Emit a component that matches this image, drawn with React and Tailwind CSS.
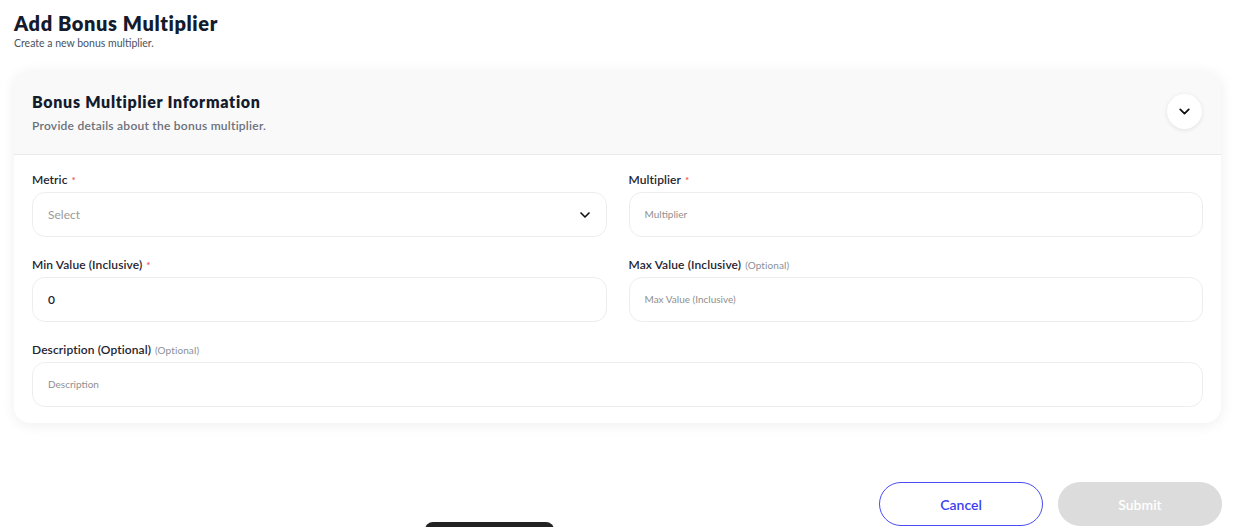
import { ChevronDown } from 'lucide-react'

const FONT = { fontFamily: '"Lato", "Noto Sans", sans-serif' }

function Label({ text, required, optional }) {
  return (
    <label className="block text-[12px] font-semibold text-[#1f2430] leading-none mb-[6px] tracking-[0.1px]">
      {text}
      {required && <span className="text-[#f0504f] ml-1 text-[10px]">*</span>}
      {optional && <span className="text-[#8a8f99] font-normal text-[10px] ml-1">(Optional)</span>}
    </label>
  )
}

function Field({ placeholder, value }) {
  return (
    <div className="h-[45px] rounded-[13px] border border-[#ededed] bg-white flex items-center px-[15px]">
      {value ? (
        <span className="text-[12px] text-[#1f2430] font-semibold">{value}</span>
      ) : (
        <span className="text-[10px] text-[#8f8f8f]">{placeholder}</span>
      )}
    </div>
  )
}

export default function App() {
  return (
    <div style={FONT} className="relative w-[1237px] h-[527px] overflow-hidden bg-white">
      {/* Page heading */}
      <div className="px-[14px] pt-[11px]">
        <h1 className="text-[20px] font-extrabold text-[#141b2d] leading-[24px] tracking-[0.6px]">Add Bonus Multiplier</h1>
        <p className="text-[10.5px] text-[#4b5160] leading-[14px] mt-[1px]">Create a new bonus multiplier.</p>
      </div>

      {/* Form card */}
      <div className="mx-[14px] mt-[21px] w-[1207px] rounded-[16px] bg-white shadow-[0_2px_14px_rgba(0,0,0,0.07)] overflow-hidden">
        <div className="bg-[#f9f9f9] border-b border-[#e9e9e9] h-[84px] flex items-center justify-between pl-[18px] pr-[19px]">
          <div>
            <h2 className="text-[16px] font-extrabold text-[#141b2d] leading-[20px] tracking-[0.7px]">Bonus Multiplier Information</h2>
            <p className="text-[12px] text-[#6b707a] font-semibold leading-[14px] mt-[7px] tracking-[0.25px]">Provide details about the bonus multiplier.</p>
          </div>
          <button className="w-[35px] h-[35px] rounded-full bg-white shadow-[0_1px_4px_rgba(0,0,0,0.1)] flex items-center justify-center mb-[3px]">
            <ChevronDown size={17} strokeWidth={2.5} className="text-[#111]" />
          </button>
        </div>

        <div className="px-[18px] pt-[19px] pb-[16px] grid grid-cols-2 gap-x-[22px] gap-y-[22px]">
          <div>
            <Label text="Metric" required />
            <div className="h-[45px] rounded-[13px] border border-[#ededed] bg-white flex items-center justify-between px-[15px]">
              <span className="text-[12px] text-[#9a9a9a]">Select</span>
              <ChevronDown size={16} strokeWidth={2.5} className="text-[#111] -mr-[2px]" />
            </div>
          </div>
          <div>
            <Label text="Multiplier" required />
            <Field placeholder="Multiplier" />
          </div>
          <div>
            <Label text="Min Value (Inclusive)" required />
            <Field value="0" />
          </div>
          <div>
            <Label text="Max Value (Inclusive)" optional />
            <Field placeholder="Max Value (Inclusive)" />
          </div>
          <div className="col-span-2">
            <Label text="Description (Optional)" optional />
            <Field placeholder="Description" />
          </div>
        </div>
      </div>

      {/* Actions */}
      <div className="flex justify-end gap-[15px] pr-[15px] mt-[59px]">
        <button className="w-[164px] h-[44px] rounded-full border border-[#4b4cf5] bg-white text-[#3b3ff0] text-[14px] font-semibold">
          Cancel
        </button>
        <button className="w-[164px] h-[44px] rounded-full bg-[#dcdcdc] text-white text-[14px] font-semibold">
          Submit
        </button>
      </div>

      {/* Toast peeking at the bottom edge */}
      <div className="absolute left-[425px] top-[522px] w-[129px] h-[20px] rounded-t-[8px] bg-[#222]" />
    </div>
  )
}
